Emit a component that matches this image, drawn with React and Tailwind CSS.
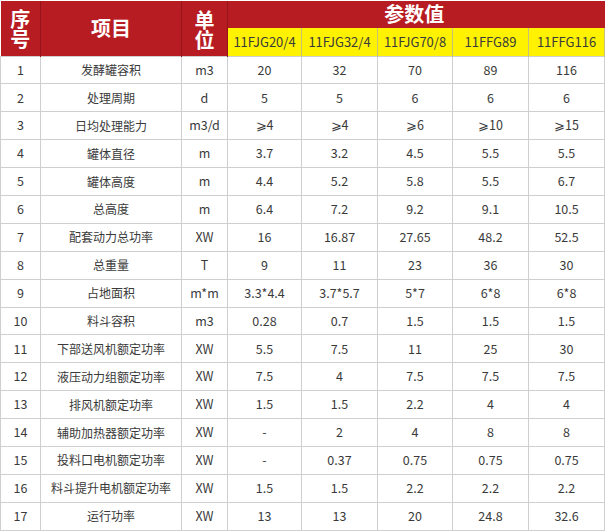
import React from 'react'

const models = ['11FJG20/4', '11FJG32/4', '11FJG70/8', '11FFG89', '11FFG116']

const rows = [
  ['1', '发酵罐容积', 'm3', '20', '32', '70', '89', '116'],
  ['2', '处理周期', 'd', '5', '5', '6', '6', '6'],
  ['3', '日均处理能力', 'm3/d', '⩾4', '⩾4', '⩾6', '⩾10', '⩾15'],
  ['4', '罐体直径', 'm', '3.7', '3.2', '4.5', '5.5', '5.5'],
  ['5', '罐体高度', 'm', '4.4', '5.2', '5.8', '5.5', '6.7'],
  ['6', '总高度', 'm', '6.4', '7.2', '9.2', '9.1', '10.5'],
  ['7', '配套动力总功率', 'XW', '16', '16.87', '27.65', '48.2', '52.5'],
  ['8', '总重量', 'T', '9', '11', '23', '36', '30'],
  ['9', '占地面积', 'm*m', '3.3*4.4', '3.7*5.7', '5*7', '6*8', '6*8'],
  ['10', '料斗容积', 'm3', '0.28', '0.7', '1.5', '1.5', '1.5'],
  ['11', '下部送风机额定功率', 'XW', '5.5', '7.5', '11', '25', '30'],
  ['12', '液压动力组额定功率', 'XW', '7.5', '4', '7.5', '7.5', '7.5'],
  ['13', '排风机额定功率', 'XW', '1.5', '1.5', '2.2', '4', '4'],
  ['14', '辅助加热器额定功率', 'XW', '-', '2', '4', '8', '8'],
  ['15', '投料口电机额定功率', 'XW', '-', '0.37', '0.75', '0.75', '0.75'],
  ['16', '料斗提升电机额定功率', 'XW', '1.5', '1.5', '2.2', '2.2', '2.2'],
  ['17', '运行功率', 'XW', '13', '13', '20', '24.8', '32.6'],
]

// column widths taken from the screenshot
const widths = [40, 141, 46, 74, 76, 75, 76, 76]

export default function App() {
  return (
    <div className="w-[611px] h-[532px] bg-white pt-px font-['Noto_Sans_CJK_SC','Noto_Sans',sans-serif]">
      <table className="table-fixed border-collapse w-[604px] text-[12.5px] text-[#3a3a3a]">
        <colgroup>
          {widths.map((w, i) => (
            <col key={i} style={{ width: w }} />
          ))}
        </colgroup>
        <thead>
          <tr className="h-[27px] bg-[#b71c22] text-white">
            <th rowSpan={2} className="border-r border-[#971519] text-[20px] font-bold p-0">
              <div className="leading-[19px] h-[19px]">序</div>
              <div className="leading-[19px] h-[19px] mt-[1px]">号</div>
            </th>
            <th rowSpan={2} className="border-r border-[#971519] text-[20px] font-bold p-0">
              项目
            </th>
            <th rowSpan={2} className="border-r border-[#971519] text-[20px] font-bold p-0 pt-[2px]">
              <div className="leading-[19px] h-[19px]">单</div>
              <div className="leading-[19px] h-[19px] mt-[1px]">位</div>
            </th>
            <th colSpan={5} className="text-[20px] leading-none font-bold p-0 pr-[4px] pb-px">
              参数值
            </th>
          </tr>
          <tr className="h-[28px] bg-[#fff200]">
            {models.map((m) => (
              <td key={m} className="border-r border-l border-[#c9c07a] text-center font-normal text-[13px] text-[#3a3a3a] p-0">
                {m}
              </td>
            ))}
          </tr>
        </thead>
        <tbody>
          {rows.map((r) => (
            <tr key={r[0]} className="h-[27.9px]">
              {r.map((c, i) => (
                <td
                  key={i}
                  className={
                    i === 1
                      ? 'border border-[#cfcfcf] text-center p-0 leading-none text-[12px]'
                      : 'border border-[#cfcfcf] text-center p-0 leading-none'
                  }
                >
                  {c}
                </td>
              ))}
            </tr>
          ))}
        </tbody>
      </table>
    </div>
  )
}
